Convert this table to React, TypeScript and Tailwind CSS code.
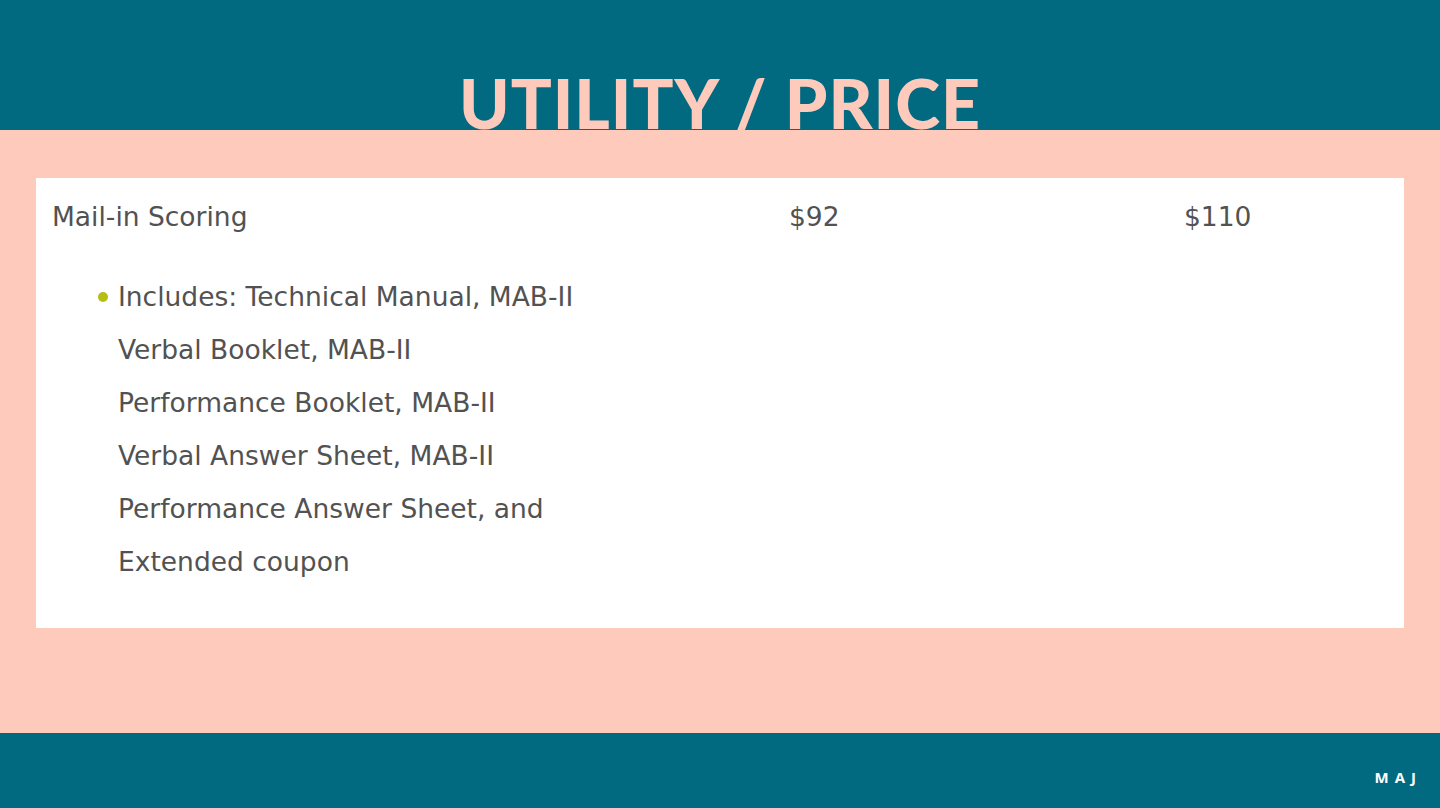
import { useState } from 'react';

const items = [
  'Includes: Technical Manual, MAB-II',
  'Verbal Booklet, MAB-II',
  'Performance Booklet, MAB-II',
  'Verbal Answer Sheet, MAB-II',
  'Performance Answer Sheet, and',
  'Extended coupon',
];

export default function App() {
  const [rows] = useState(items);

  return (
    <div className="w-[1440px] h-[808px] flex flex-col bg-[#fecabb] font-['DejaVu_Sans',sans-serif]">
      {/* Header */}
      <div className="h-[130px] shrink-0 bg-[#016a80] flex justify-center">
        <h1 className="mt-[61px] h-[69px] text-[68px] leading-[84px] font-black text-[#fecabb] tracking-[1px] font-['Lato',sans-serif] whitespace-nowrap">
          UTILITY / PRICE
        </h1>
      </div>

      {/* Body */}
      <div className="flex-1 px-[36px] pt-[48px]">
        <div className="bg-white h-[450px] pl-[16px] pt-[21px] text-[#525252]">
          <div className="flex text-[26.5px] leading-[36px]">
            <span className="w-[737px]">Mail-in Scoring</span>
            <span className="w-[395px]">$92</span>
            <span>$110</span>
          </div>
          <ul className="mt-[35px] pl-[46px] text-[26.5px] leading-[53px]">
            {rows.map((t, i) => (
              <li key={i} className="flex items-center">
                <span className={i === 0 ? 'w-[10px] h-[10px] rounded-full bg-[#b6bd15] mr-[10px]' : 'w-[10px] mr-[10px]'} />
                <span>{t}</span>
              </li>
            ))}
          </ul>
        </div>
      </div>

      {/* Footer */}
      <div className="h-[75px] shrink-0 bg-[#016a80] flex justify-end items-center pr-[18px] pt-[14px]">
        <span className="text-white text-[15px] font-bold tracking-[6px] font-['Open_Sans',sans-serif]">MAJ</span>
      </div>
    </div>
  );
}
